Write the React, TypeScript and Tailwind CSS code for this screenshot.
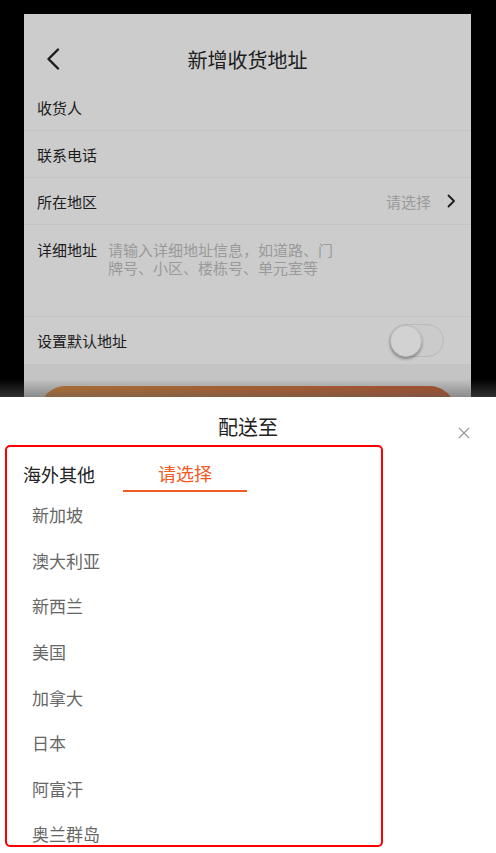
import React from "react";

const font = { fontFamily: '"Noto Sans CJK SC", "Noto Sans", sans-serif' };

const countries = ["新加坡", "澳大利亚", "新西兰", "美国", "加拿大", "日本", "阿富汗", "奥兰群岛"];

function FormRow({ label, children }: { label: string; children?: React.ReactNode }) {
  return (
    <div className="h-[47px] shrink-0 flex items-center px-[13px] border-b border-[#c3c3c3]">
      <span className="text-[15px] text-[#1c1c1c] leading-none">{label}</span>
      {children}
    </div>
  );
}

export default function App() {
  return (
    <div className="w-[496px] h-[853px] bg-black flex flex-col overflow-hidden" style={font}>
      {/* Page behind the sheet, dimmed */}
      <div className="relative h-[397px] shrink-0 pt-[14px] pl-[24px] pr-[25px] overflow-hidden">
        <div className="h-full bg-[#cccccc] flex flex-col overflow-hidden">
          {/* Header */}
          <div className="h-[70px] shrink-0 relative flex items-end justify-center pb-[10px]">
            <svg className="absolute left-[22px] top-[34px]" width="14" height="22" viewBox="0 0 14 22">
              <polyline points="12,1.5 2.5,11 12,20.5" fill="none" stroke="#1c1c1c" strokeWidth="2.4" strokeLinecap="round" strokeLinejoin="round" />
            </svg>
            <span className="text-[20px] leading-[28px] text-[#1c1c1c]">新增收货地址</span>
          </div>

          <FormRow label="收货人" />
          <FormRow label="联系电话" />
          <FormRow label="所在地区">
            <span className="ml-auto text-[15px] text-[#9a9a9a] leading-none">请选择</span>
            <svg className="ml-[16px] mr-[2px]" width="9" height="14" viewBox="0 0 9 14">
              <polyline points="1.5,1.5 7,7 1.5,12.5" fill="none" stroke="#1c1c1c" strokeWidth="1.8" strokeLinecap="round" strokeLinejoin="round" />
            </svg>
          </FormRow>
          <div className="h-[92px] shrink-0 flex items-start px-[13px] pt-[16px] border-b border-[#c3c3c3]">
            <span className="text-[15px] text-[#1c1c1c] leading-[18px] w-[60px] shrink-0">详细地址</span>
            <div className="ml-[11px] text-[15px] text-[#9a9a9a] leading-[18px]">
              <div>请输入详细地址信息，如道路、门</div>
              <div>牌号、小区、楼栋号、单元室等</div>
            </div>
          </div>
          <div className="h-[47px] shrink-0 flex items-center px-[13px]">
            <span className="text-[15px] text-[#1c1c1c] leading-none">设置默认地址</span>
            <div className="ml-auto mr-[14px] w-[55px] h-[33px] rounded-full border border-[#b9b9b9] bg-[#cbcbcb] flex items-center">
              <div className="w-[32px] h-[32px] rounded-full bg-[#d2d2d2] shadow-[0_2px_3px_rgba(0,0,0,0.35)] border border-[#bdbdbd]" />
            </div>
          </div>

          {/* Bottom area with submit button */}
          <div className="flex-1 shrink-0 bg-[#c4c4c4] px-[16px] pt-[22px]">
            <div className="h-[50px] rounded-[25px] bg-linear-to-r from-[#c2742a] to-[#b24b22]" />
          </div>
        </div>
        {/* shadow cast by the sheet */}
        <div className="absolute left-0 right-0 bottom-0 h-[18px] bg-linear-to-b from-transparent to-[rgba(90,90,90,0.55)]" />
      </div>

      {/* Bottom sheet */}
      <div className="flex-1 bg-white flex flex-col">
        <div className="relative h-[48px] shrink-0 flex justify-center pt-[16px]">
          <span className="text-[20px] leading-[28px] text-[#222]">配送至</span>
          <svg className="absolute left-[458px] top-[30px]" width="12" height="12" viewBox="0 0 12 12">
            <path d="M1 1L11 11M11 1L1 11" stroke="#9a9a9a" strokeWidth="1.2" />
          </svg>
        </div>

        <div className="ml-[5px] w-[378px] h-[402px] border-2 border-[#ff0000] rounded-[5px] overflow-hidden flex flex-col">
          <div className="h-[45px] shrink-0 flex items-stretch">
            <div className="ml-[16px] flex items-center text-[18px] text-[#222] leading-none pt-[9px]">海外其他</div>
            <div className="ml-[28px] w-[124px] flex items-center justify-center text-[18px] text-[#f25a1f] leading-none pt-[9px] border-b-2 border-[#f25a1f]">
              请选择
            </div>
          </div>
          <div className="flex flex-col">
            {countries.map((c) => (
              <div key={c} className="h-[45.6px] shrink-0 flex items-center pl-[25px] text-[17px] text-[#666] leading-none">
                {c}
              </div>
            ))}
          </div>
        </div>
      </div>
    </div>
  );
}
